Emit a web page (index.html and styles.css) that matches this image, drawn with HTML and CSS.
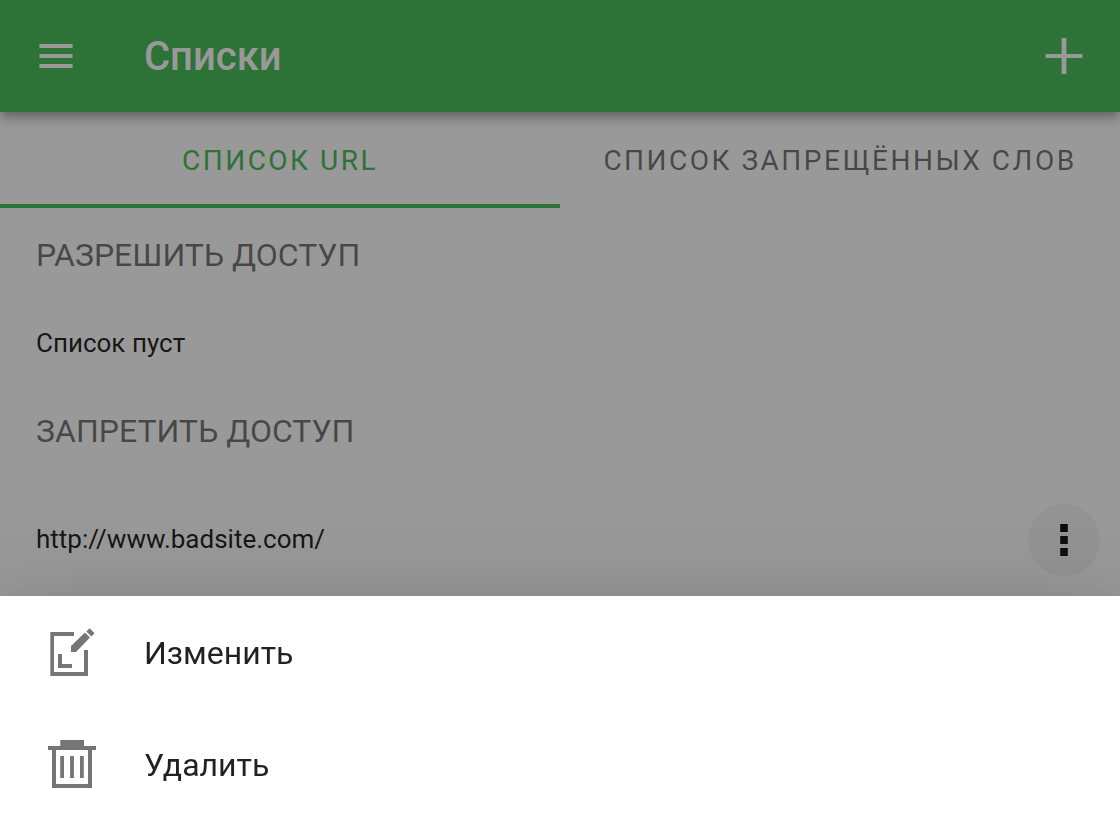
FILE: index.html
```html
<!DOCTYPE html>
<html lang="ru">
<head>
<meta charset="utf-8">
<title>Списки</title>
<link rel="stylesheet" href="styles.css">
</head>
<body>
<div class="page">
  <header class="app-bar">
    <svg class="bar-icon" viewBox="0 0 48 48"><path d="M7.4 12h33.2v4H7.4zM7.4 22h33.2v4H7.4zM7.4 32h33.2v4H7.4z"/></svg>
    <h1 class="app-title">Списки</h1>
    <svg class="bar-icon" viewBox="0 0 48 48"><path d="M21.600 6h4.800v16h16v4h-16v12h-4.800V26h-16v-4h16zM21.600 38h4.800v4h-4.800z"/></svg>
  </header>
  <nav class="tabs">
    <a class="tab tab-active">СПИСОК URL</a>
    <a class="tab">СПИСОК ЗАПРЕЩЁННЫХ СЛОВ</a>
  </nav>
  <main class="content">
    <h2 class="section-title">РАЗРЕШИТЬ ДОСТУП</h2>
    <div class="row row-empty"><span class="row-text">Список пуст</span></div>
    <h2 class="section-title">ЗАПРЕТИТЬ ДОСТУП</h2>
    <div class="row row-site">
      <span class="row-text">http://www.badsite.com/</span>
      <button class="more" aria-label="Меню"><svg class="more-icon" viewBox="0 0 48 48"><path d="M20.200 8h7.600v8h-7.600zM20.200 20h7.600v8h-7.600zM20.200 32h7.600v8h-7.600z"/></svg></button>
    </div>
  </main>
</div>
<div class="scrim"></div>
<div class="sheet">
  <div class="action">
    <svg class="action-icon" viewBox="0 0 48 48"><path d="M2.300 4H26v4H6v36h30V22h4v26H2.300zM10 26h4v10h10v4H10zM23 24v-6L37 4.500l5 5L28 24zM38.400 3.400L41.600 .3l5 5-3.200 3.100z"/></svg>
    <span class="action-label">Изменить</span>
  </div>
  <div class="action">
    <svg class="action-icon" viewBox="0 0 48 48"><path fill-rule="evenodd" d="M12.300 0H36v6h12v4h-4v38H4V10H0V6h12.300zM8 10v34h32V10zM12.200 16H16v22h-3.800zM22.100 16h3.800v22h-3.800zM32 16h3.800v22H32z"/></svg>
    <span class="action-label">Удалить</span>
  </div>
</div>
</body>
</html>
```
FILE: styles.css
```css
* { box-sizing: border-box; }
body {
  margin: 0;
  height: 820px;
  overflow: hidden;
  background: #fff;
  font-family: Roboto, sans-serif;
  color: rgba(0, 0, 0, .87);
}
.app-bar {
  position: relative;
  display: flex;
  align-items: center;
  height: 112px;
  padding: 0 32px;
  background: #4bbe5b;
  color: #fff;
  box-shadow: 0 4px 8px -2px rgba(0, 0, 0, .2), 0 8px 10px rgba(0, 0, 0, .14), 0 2px 20px rgba(0, 0, 0, .12);
}
.bar-icon { width: 48px; height: 48px; fill: currentColor; }
.app-title {
  flex: 1;
  margin: 0 0 0 64px;
  padding-top: 2px;
  font-size: 40px;
  font-weight: 500;
  line-height: 56px;
}
.tabs { display: grid; grid-template-columns: 1fr 1fr; height: 96px; }
.tab {
  display: flex;
  align-items: center;
  justify-content: center;
  font-size: 28px;
  letter-spacing: 2.5px;
  color: rgba(0, 0, 0, .54);
  border-bottom: 4px solid transparent;
  padding-top: 4px;
  white-space: nowrap;
}
.tab-active { color: #4bbe5b; border-color: #4bbe5b; }
.section-title {
  margin: 0;
  padding: 0 36px;
  height: 96px;
  font-size: 32px;
  font-weight: 400;
  line-height: 94px;
  color: rgba(0, 0, 0, .54);
}
.row { display: flex; align-items: center; padding: 0 20px 0 36px; font-size: 26px; }
.row-text { padding-bottom: 2px; }
.row-empty { height: 80px; }
.row-site { height: 120px; justify-content: space-between; }
.more {
  display: flex;
  align-items: center;
  justify-content: center;
  width: 72px;
  height: 72px;
  padding: 0;
  border: 0;
  border-radius: 50%;
  background: rgba(0, 0, 0, .04);
}
.more-icon { width: 48px; height: 48px; fill: rgba(0, 0, 0, .9); }
.scrim { position: fixed; inset: 0; background: rgba(0, 0, 0, .4); }
.sheet {
  position: fixed;
  left: 0;
  right: 0;
  bottom: 0;
  height: 224px;
  background: #fff;
  box-shadow: 0 22px 30px -14px rgba(0, 0, 0, .2), 0 48px 76px 6px rgba(0, 0, 0, .14), 0 18px 92px 16px rgba(0, 0, 0, .12);
}
.action {
  display: flex;
  align-items: center;
  gap: 48px;
  height: 112px;
  padding-left: 48px;
  font-size: 32px;
}
.action-label { padding-top: 2px; }
.action-icon { width: 48px; height: 48px; fill: #757575; }
```
